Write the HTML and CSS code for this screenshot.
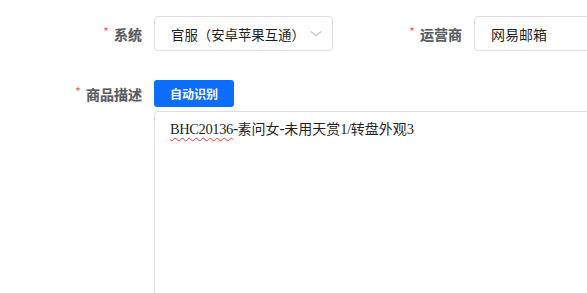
FILE: index.html
```html
<!DOCTYPE html>
<html lang="zh">
<head>
<meta charset="utf-8">
<link rel="stylesheet" href="styles.css">
</head>
<body>
<div class="form">
  <div class="row row-top">
    <div class="item">
      <label class="label label-a"><span class="star">*</span>系统</label>
      <div class="select">
        <span class="select-text">官服（安卓苹果互通）</span>
        <svg class="chev" width="12" height="8" viewBox="0 0 12 8"><path d="M1 1.5 L6 6 L11 1.5" fill="none" stroke="#c0c4cc" stroke-width="1.2"/></svg>
      </div>
    </div>
    <div class="item">
      <label class="label label-b"><span class="star">*</span>运营商</label>
      <div class="input">网易邮箱</div>
    </div>
  </div>
  <div class="row row-desc">
    <label class="label label-a label-desc"><span class="star">*</span>商品描述</label>
    <div class="desc-body">
      <button class="btn">自动识别</button>
      <div class="textarea"><span class="lat wavy">BHC20136</span><span class="lat dash">-</span>素问女<span class="lat dash">-</span>未用天赏<span class="lat">1/</span>转盘外观<span class="lat">3</span></div>
    </div>
  </div>
</div>
</body>
</html>
```

FILE: styles.css
```css
html, body {
  margin: 0;
  padding: 0;
  background: #ffffff;
}
body {
  font-family: "Noto Sans CJK SC", "Noto Sans", sans-serif;
  color: #303133;
}
.form {
  box-sizing: border-box;
  width: 587px;
  height: 293px;
  overflow: hidden;
  padding-top: 16px;
}
.row {
  display: flex;
}
.row-top {
  align-items: center;
  height: 35px;
}
.item {
  display: flex;
  align-items: center;
  flex-shrink: 0;
}
.label {
  font-size: 14px;
  font-weight: 700;
  color: #5a5c61;
  display: flex;
  align-items: center;
  justify-content: flex-end;
  white-space: nowrap;
  flex-shrink: 0;
  -webkit-text-stroke: 0.2px #5a5c61;
}
.label-a {
  width: 142px;
  margin-right: 12px;
}
.label-b {
  width: 100px;
  margin-left: 29px;
  margin-right: 12px;
}
.star {
  color: #f56c6c;
  font-weight: 400;
  font-size: 13px;
  margin-right: 5px;
  position: relative;
  top: -2px;
  -webkit-text-stroke: 0;
}
.select {
  box-sizing: border-box;
  width: 179px;
  height: 35px;
  border: 1px solid #dcdfe6;
  border-radius: 4px;
  display: flex;
  align-items: center;
  padding-left: 16px;
  padding-right: 10px;
  flex-shrink: 0;
}
.select-text {
  font-size: 13.4px;
  color: #1f1f1f;
  flex: 1;
  white-space: nowrap;
}
.chev {
  display: block;
}
.input {
  box-sizing: border-box;
  width: 200px;
  height: 35px;
  border: 1px solid #dcdfe6;
  border-radius: 4px;
  display: flex;
  align-items: center;
  padding-left: 16px;
  font-size: 14px;
  color: #1f1f1f;
  flex-shrink: 0;
}
.row-desc {
  margin-top: 29px;
  align-items: flex-start;
}
.label-desc {
  height: 27px;
}
.desc-body {
  display: flex;
  flex-direction: column;
  align-items: flex-start;
  flex-shrink: 0;
}
.btn {
  width: 80px;
  height: 27px;
  border: none;
  border-radius: 3px;
  background: #0d6efd;
  color: #ffffff;
  font-family: "Noto Sans CJK SC", sans-serif;
  font-size: 12px;
  font-weight: 700;
  padding: 0;
  cursor: pointer;
}
.textarea {
  box-sizing: border-box;
  margin-top: 4px;
  width: 460px;
  height: 190px;
  border: 1px solid #dcdfe6;
  border-radius: 4px;
  padding: 6px 15px;
  font-size: 14px;
  line-height: 20px;
  color: #1f1f1f;
  white-space: nowrap;
}
.lat {
  font-family: "Liberation Serif", serif;
  font-size: 14.5px;
  letter-spacing: -0.4px;
}
.dash {
  font-size: 16px;
  letter-spacing: -0.6px;
}
.wavy {
  text-decoration: underline wavy #e53935;
  text-decoration-thickness: 1px;
  text-underline-offset: 3px;
}
```
